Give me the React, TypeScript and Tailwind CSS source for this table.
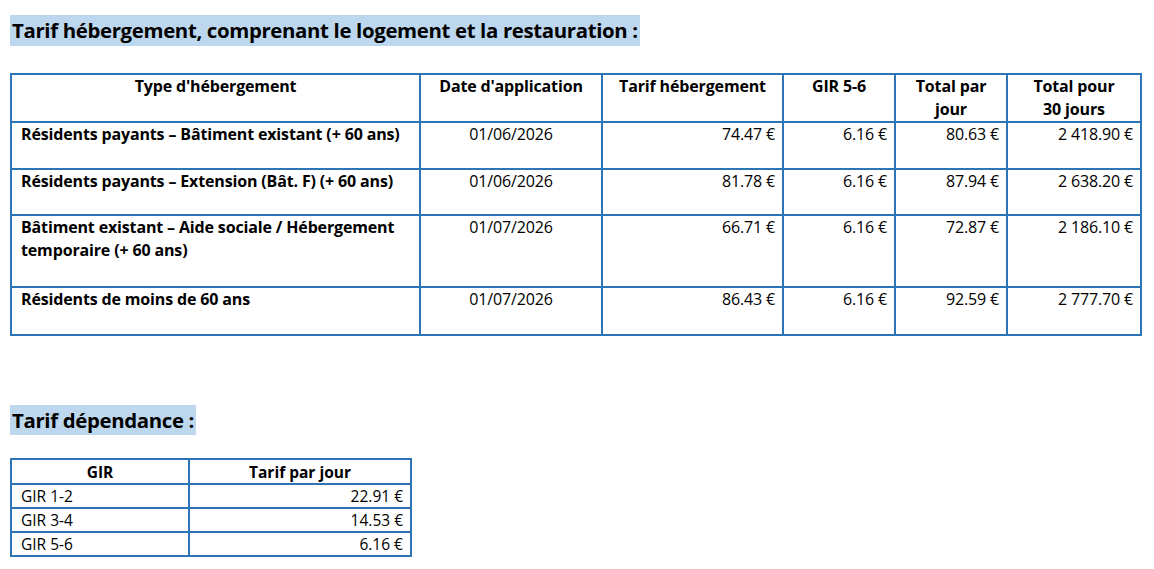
import React from "react";

const rows = [
  {
    type: "Résidents payants – Bâtiment existant (+ 60 ans)",
    date: "01/06/2026",
    tarif: "74.47 €",
    gir: "6.16 €",
    jour: "80.63 €",
    mois: "2 418.90 €",
    h: "h-[47px]",
  },
  {
    type: "Résidents payants – Extension (Bât. F) (+ 60 ans)",
    date: "01/06/2026",
    tarif: "81.78 €",
    gir: "6.16 €",
    jour: "87.94 €",
    mois: "2 638.20 €",
    h: "h-[46px]",
  },
  {
    type: "Bâtiment existant – Aide sociale / Hébergement temporaire (+ 60 ans)",
    date: "01/07/2026",
    tarif: "66.71 €",
    gir: "6.16 €",
    jour: "72.87 €",
    mois: "2 186.10 €",
    h: "h-[72px]",
  },
  {
    type: "Résidents de moins de 60 ans",
    date: "01/07/2026",
    tarif: "86.43 €",
    gir: "6.16 €",
    jour: "92.59 €",
    mois: "2 777.70 €",
    h: "h-[48px]",
  },
];

const dependance = [
  { gir: "GIR 1-2", tarif: "22.91 €" },
  { gir: "GIR 3-4", tarif: "14.53 €" },
  { gir: "GIR 5-6", tarif: "6.16 €" },
];

const cell = "border-2 border-[#2e75b6] align-top pt-0 leading-[23px]";
const small = "border-2 border-[#2e75b6] leading-[20px] p-0";

export default function App() {
  return (
    <div className="w-[1154px] h-[569px] bg-white text-black font-['Open_Sans','Liberation_Sans',sans-serif] overflow-hidden">
      <div className="pl-[10px] pt-[15px]">
        <h2 className="inline-block bg-[#bdd7ee] px-[2px] h-[31px] leading-[31px] text-[20.4px] font-bold tracking-[-0.35px]">
          Tarif hébergement, comprenant le logement et la restauration :
        </h2>
      </div>

      {/* Hébergement */}
      <table className="ml-[10px] mt-[27px] border-collapse table-fixed w-[1130px] text-[16px] font-bold tracking-[-0.15px]">
        <colgroup>
          <col className="w-[409px]" />
          <col className="w-[182px]" />
          <col className="w-[181px]" />
          <col className="w-[112px]" />
          <col className="w-[112px]" />
          <col className="w-[134px]" />
        </colgroup>
        <thead>
          <tr className="h-[48px]">
            <th className={`${cell} text-center`}>Type d'hébergement</th>
            <th className={`${cell} text-center`}>Date d'application</th>
            <th className={`${cell} text-center`}>Tarif hébergement</th>
            <th className={`${cell} text-center`}>GIR 5-6</th>
            <th className={`${cell} text-center`}>
              Total par
              <br />
              jour
            </th>
            <th className={`${cell} text-center`}>
              Total pour
              <br />
              30 jours
            </th>
          </tr>
        </thead>
        <tbody>
          {rows.map((r) => (
            <tr key={r.type} className={r.h}>
              <td className={`${cell} pl-[9px] pr-2`}>{r.type}</td>
              <td className={`${cell} text-center font-normal`}>{r.date}</td>
              <td className={`${cell} text-right pr-[7px] font-normal`}>{r.tarif}</td>
              <td className={`${cell} text-right pr-[7px] font-normal`}>{r.gir}</td>
              <td className={`${cell} text-right pr-[7px] font-normal`}>{r.jour}</td>
              <td className={`${cell} text-right pr-[7px] font-normal`}>{r.mois}</td>
            </tr>
          ))}
        </tbody>
      </table>

      <div className="pl-[10px] pt-[69px]">
        <h2 className="inline-block bg-[#bdd7ee] px-[2px] h-[30px] leading-[30px] text-[20.4px] font-bold tracking-[-0.35px]">
          Tarif dépendance :
        </h2>
      </div>

      {/* Dépendance */}
      <table className="ml-[10px] mt-[23px] border-collapse table-fixed w-[400px] text-[15.5px]">
        <colgroup>
          <col className="w-[178px]" />
          <col className="w-[222px]" />
        </colgroup>
        <thead>
          <tr className="h-[25px]">
            <th className={`${small} text-center font-bold`}>GIR</th>
            <th className={`${small} text-center font-bold`}>Tarif par jour</th>
          </tr>
        </thead>
        <tbody>
          {dependance.map((d) => (
            <tr key={d.gir} className="h-[24px]">
              <td className={`${small} pl-[9px]`}>{d.gir}</td>
              <td className={`${small} text-right pr-[7px]`}>{d.tarif}</td>
            </tr>
          ))}
        </tbody>
      </table>
    </div>
  );
}
